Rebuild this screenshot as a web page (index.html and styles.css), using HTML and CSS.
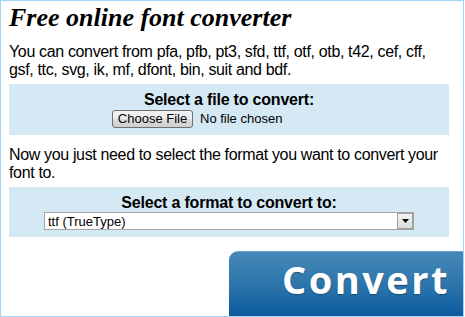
FILE: index.html
```html
<!DOCTYPE html>
<html lang="en">

<head>
  <meta charset="UTF-8">
  <meta name="viewport" content="width=device-width, initial-scale=1.0">
  <title>Free online font converter</title>
  <link rel="stylesheet" href="styles.css">
</head>

<body>
  <div class="page">
    <h1>Free online font converter</h1>
    <p>You can convert from pfa, pfb, pt3, sfd, ttf, otf, otb, t42, cef, cff, gsf, ttc, svg, ik, mf, dfont, bin, suit and bdf.</p>

    <!-- File Selection -->
    <div class="panel">
      <label class="panel-title" for="file">Select a file to convert:</label>
      <div class="file-row">
        <button class="file-button" type="button">Choose File</button>
        <span class="file-name">No file chosen</span>
      </div>
    </div>

    <p>Now you just need to select the format you want to convert your font to.</p>

    <!-- Format Selection -->
    <div class="panel">
      <label class="panel-title" for="format">Select a format to convert to:</label>
      <div class="select-box">
        <select id="format">
          <option value="ttf">ttf (TrueType)</option>
          <option value="otf">otf (OpenType)</option>
          <option value="woff">woff (Web Open Font Format)</option>
          <option value="svg">svg (Scalable Vector Graphics)</option>
          <option value="eot">eot (Embedded OpenType)</option>
        </select>
        <span class="select-arrow">
          <svg width="7" height="4" viewBox="0 0 7 4"><path d="M0 0H7L3.5 4Z" fill="#000"/></svg>
        </span>
      </div>
    </div>

    <button class="convert" type="button">Convert</button>
  </div>
</body>

</html>
```

FILE: styles.css
```css
body {
  margin: 0;
  font-family: "Liberation Sans", Arial, sans-serif;
  color: #000;
  background-color: #fff;
}

.page {
  box-sizing: border-box;
  width: 464px;
  height: 317px;
  padding: 3px 14px 0 8px;
  border: 1px solid #a6d4f7;
  overflow: hidden;
}

h1 {
  margin: 0;
  font-family: "Liberation Serif", Georgia, serif;
  font-style: italic;
  font-weight: bold;
  font-size: 26px;
  line-height: 28px;
}

p {
  max-width: 432px;
  margin: 11px 0 0;
  font-size: 16px;
  line-height: 18px;
  letter-spacing: -0.35px;
}

.panel {
  margin-top: 5px;
  padding: 7px 0;
  background-color: #d5e9f5;
  text-align: center;
}

.panel-title {
  display: block;
  font-size: 16px;
  font-weight: bold;
  line-height: 18px;
  letter-spacing: -0.2px;
}

.file-row {
  display: inline-flex;
  align-items: center;
  width: 234px;
  height: 18px;
  text-align: left;
}

.file-button {
  box-sizing: border-box;
  width: 81px;
  height: 18px;
  padding: 0;
  border: 1px solid #707070;
  border-radius: 3px;
  background: linear-gradient(#f2f2f2, #ebebeb 50%, #dddddd 51%, #cfcfcf);
  font-family: "Liberation Sans", Arial, sans-serif;
  font-size: 13px;
  color: #000;
}

.file-name {
  margin-left: 7px;
  font-size: 13px;
}

.select-box {
  box-sizing: border-box;
  display: inline-flex;
  width: 370px;
  height: 18px;
  border: 1px solid #a5a5a5;
  background-color: #fff;
  text-align: left;
}

.select-box select {
  flex: 1;
  appearance: none;
  margin: 0;
  padding: 0 3px;
  border: none;
  background: none;
  font-family: "Liberation Sans", Arial, sans-serif;
  font-size: 13px;
  color: #000;
  outline: none;
}

.select-arrow {
  box-sizing: border-box;
  display: flex;
  align-items: center;
  justify-content: center;
  width: 16px;
  height: 16px;
  border: 1px solid #9c9c9c;
  background: linear-gradient(#f4f4f4, #dcdcdc);
}

.convert {
  display: block;
  box-sizing: border-box;
  width: 262px;
  margin: 14px 0 0 220px;
  padding: 1px 0 27px 53px;
  border: none;
  border-top: 1px solid #6aa3cc;
  border-radius: 9px 0 0 9px;
  background: linear-gradient(#4689b8, #2a73aa 45%, #0b5a9f 80%);
  font-family: "Open Sans", sans-serif;
  font-weight: 700;
  font-size: 38px;
  line-height: 52px;
  letter-spacing: 2.5px;
  color: #fff;
  text-align: left;
  text-shadow: 0 1px 1px rgba(0, 0, 0, 0.35);
}
```
